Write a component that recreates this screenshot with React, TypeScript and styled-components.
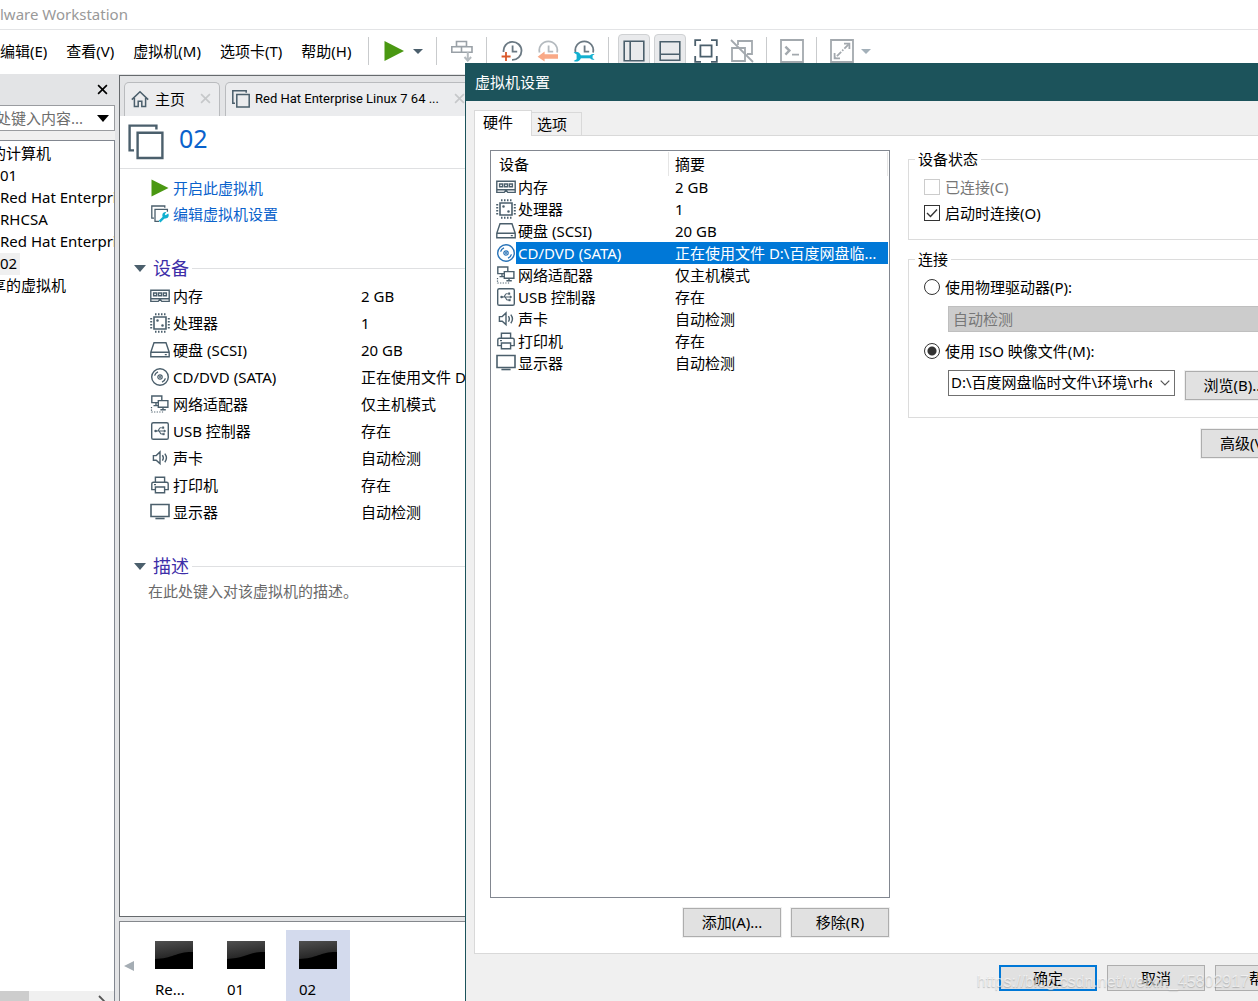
import React from "react";
import styled, { createGlobalStyle, css } from "styled-components";

const Global = createGlobalStyle`
  *, *::before, *::after { box-sizing: border-box; }
  html, body, #root { height: 100%; }
  body { margin: 0; overflow: hidden; }
  body, button, input, select {
    font-family: "Noto Sans", "Noto Sans CJK SC", sans-serif;
    font-size: 15px;
    line-height: 20px;
    color: #000;
  }
  button { cursor: pointer; }
`;

const slate = "#4b5f6c";

/* ---------- window frame ---------- */

const Window = styled.div`
  position: relative;
  display: flex;
  flex-direction: column;
  height: 100vh;
  overflow: hidden;
  background: #fff;
`;

const TitleBar = styled.header`
  flex: none;
  height: 30px;
  padding: 4px 0;
  border-bottom: 1px solid #e3e4e6;
  color: #999;
`;

const MenuBar = styled.div`
  flex: none;
  display: flex;
  align-items: center;
  height: 44px;
  padding-bottom: 2px;
  white-space: nowrap;
`;

const Menus = styled.nav`
  display: flex;
  gap: 19px;
  width: 368px;
`;

const MenuItem = styled.button`
  padding: 0;
  border: 0;
  background: none;
`;

const Divider = styled.span`
  flex: none;
  width: 1px;
  height: 28px;
  background: #c9cbcd;
`;

const Tools = styled.div<{ $gap?: number; $pad?: number }>`
  display: flex;
  align-items: center;
  gap: ${(p) => p.$gap ?? 0}px;
  padding: 0 ${(p) => (p.$pad ?? 14) - 1}px 0 ${(p) => p.$pad ?? 14}px;
`;

const ToolButton = styled.button<{ $pressed?: boolean; $wide?: number }>`
  display: flex;
  align-items: center;
  justify-content: center;
  width: ${(p) => p.$wide ?? 22}px;
  height: 34px;
  padding: 0;
  border: 1px solid ${(p) => (p.$pressed ? "#cfd1d3" : "transparent")};
  border-radius: 4px;
  background: ${(p) => (p.$pressed ? "#e9eaec" : "none")};
  svg { flex: none; display: block; }
`;

const Workspace = styled.div`
  flex: 1;
  min-height: 0;
  display: flex;
  gap: 4px;
  background: #e3e4e6;
`;

/* ---------- library sidebar ---------- */

const Sidebar = styled.aside`
  flex: none;
  width: 115px;
  display: flex;
  flex-direction: column;
  overflow: hidden;
  white-space: nowrap;
  background: #f0f0f0;
`;

const SidebarHead = styled.div`
  display: flex;
  justify-content: flex-end;
  align-items: center;
  height: 31px;
  padding: 0 7px;
  background: #e3e4e6;
`;

const IconButton = styled.button`
  display: flex;
  padding: 0;
  border: 0;
  background: none;
  svg { display: block; }
`;

const SearchBox = styled.div`
  display: flex;
  align-items: center;
  height: 26px;
  padding-right: 5px;
  border: 1px solid #9a9ca0;
  border-left: 0;
  background: #fff;
`;

const SearchInput = styled.input`
  flex: 1;
  min-width: 0;
  padding: 0;
  border: 0;
  outline: 0;
  background: none;
  text-indent: -4px;
  color: #6d6d6d;
`;

const Tree = styled.ul`
  flex: 1;
  margin: 9px 0 0;
  padding: 2px 0;
  list-style: none;
  overflow: hidden;
  border: 1px solid #828790;
  border-width: 1px 1px 0 0;
  background: #fff;
`;

const TreeRow = styled.li<{ $depth: number }>`
  height: 22px;
  margin-left: ${(p) => (p.$depth ? 0 : -9)}px;
`;

const TreeLabel = styled.span<{ $selected?: boolean }>`
  display: inline-block;
  height: 22px;
  padding-right: 3px;
  background: ${(p) => (p.$selected ? "#f0f0f0" : "none")};
`;

const ScrollTrack = styled.div`
  flex: none;
  display: flex;
  justify-content: space-between;
  height: 10px;
  padding-right: 8px;
  overflow: hidden;
  border-right: 1px solid #828790;
`;

const ScrollThumb = styled.span`
  width: 29px;
  background: #cdcdcd;
`;

/* ---------- machine view ---------- */

const Main = styled.main`
  flex: 1;
  min-width: 0;
  display: flex;
  flex-direction: column;
  gap: 4px;
  padding-top: 1px;
`;

const Machine = styled.section`
  flex: 1;
  min-height: 0;
  border: 1px solid #666a6d;
  background: #fff;
`;

const TabStrip = styled.div`
  display: flex;
  gap: 5px;
  height: 40px;
  padding: 6px 4px 0;
  background: #e3e4e6;
`;

const Tab = styled.div`
  display: flex;
  align-items: center;
  gap: 6px;
  padding: 0 8px 2px 6px;
  border: 1px solid #b9bbbe;
  border-bottom: 0;
  border-radius: 5px 5px 0 0;
  background: #ebecee;
  white-space: nowrap;
`;

const TabLink = styled.button<{ $small?: boolean }>`
  display: flex;
  align-items: center;
  gap: ${(p) => (p.$small ? 5 : 6)}px;
  margin-right: 9px;
  padding: 0;
  border: 0;
  background: none;
  ${(p) => p.$small && css`font-family: Roboto, sans-serif; font-size: 13px;`}
`;

const MachineHead = styled.div`
  display: flex;
  align-items: center;
  gap: 15px;
  height: 53px;
  padding: 0 8px;
  border-bottom: 1px solid #dfe0e2;
`;

const MachineName = styled.h1`
  margin: 0;
  padding-bottom: 8px;
  font-size: 25px;
  line-height: 36px;
  font-weight: 400;
  color: #0a62cc;
`;

const Actions = styled.div`
  padding: 6px 30px 27px;
`;

const ActionLink = styled.a`
  display: flex;
  align-items: center;
  gap: 3px;
  height: 26px;
  color: #0a62cc;
  text-decoration: none;
  svg { flex: none; }
`;

const SectionTitle = styled.h2`
  display: flex;
  align-items: center;
  gap: 7px;
  height: 28px;
  margin: 0;
  padding-left: 14px;
  font-size: 18px;
  line-height: 28px;
  font-weight: 400;
  color: #3d2ea8;
  white-space: nowrap;
  &::after {
    content: "";
    flex: 1;
    margin-left: -4px;
    height: 1px;
    background: #dfe0e2;
  }
`;

const Summary = styled.table`
  margin: 0 0 27px 30px;
  border-collapse: collapse;
  white-space: nowrap;
  td, th { height: 27px; padding: 0; font-weight: 400; text-align: left; }
  th { width: 211px; }
`;

const Named = styled.span`
  display: flex;
  align-items: center;
  gap: 3px;
  svg { flex: none; }
`;

const Description = styled.p`
  margin: 1px 28px;
  color: #6a6a6a;
`;

const Strip = styled.section`
  flex: none;
  display: flex;
  gap: 8px;
  height: 80px;
  padding: 8px 4px 0;
  border: 1px solid #85888d;
  border-bottom: 0;
  background: #fff;
`;

const StripArrow = styled(IconButton)`
  align-items: center;
  width: 10px;
`;

const Thumb = styled.button<{ $active?: boolean }>`
  display: flex;
  flex-direction: column;
  align-items: flex-start;
  gap: 10px;
  width: 64px;
  padding: 11px 13px 0;
  border: 0;
  background: ${(p) => (p.$active ? "#d3daed" : "none")};
  svg { flex: none; }
`;

/* ---------- settings dialog ---------- */

const Dialog = styled.section`
  position: absolute;
  top: 63px;
  left: 465px;
  right: -65px;
  bottom: 0;
  display: flex;
  flex-direction: column;
  border-left: 1px solid #1c535b;
  background: #f0f0f0;
  white-space: nowrap;
`;

const DialogTitle = styled.h2`
  flex: none;
  height: 38px;
  margin: 0 0 9px;
  padding: 9px;
  background: #1c535b;
  color: #fff;
  font-size: 15px;
  line-height: 20px;
  font-weight: 400;
`;

const DialogTabs = styled.div`
  display: flex;
  align-items: flex-end;
  padding-left: 8px;
`;

const DialogTab = styled.button<{ $active?: boolean }>`
  border: 1px solid #d9d9d9;
  border-bottom: 0;
  text-align: left;
  ${(p) =>
    p.$active
      ? css`
          position: relative;
          height: 26px;
          width: 58px;
          margin-bottom: -1px;
          padding: 0 0 4px 8px;
          background: #fff;
        `
      : css`
          height: 23px;
          width: 50px;
          padding: 0 0 0 5px;
          border-left: 0;
          background: #f0f0f0;
        `}
`;

const DialogPage = styled.div`
  flex: 1;
  min-height: 0;
  display: flex;
  gap: 18px;
  margin: 0 9px 0 8px;
  padding: 14px 13px 15px 15px;
  border: 1px solid #d9d9d9;
  background: #fff;
`;

const HardwareColumn = styled.div`
  flex: none;
  width: 400px;
  display: flex;
  flex-direction: column;
  gap: 9px;
`;

const ListBox = styled.div`
  flex: 1;
  padding-right: 1px;
  border: 1px solid #828790;
`;

const Hardware = styled.table`
  width: 100%;
  border-collapse: collapse;
  table-layout: fixed;
  th, td { padding: 0; text-align: left; font-weight: 400; }
  th { height: 25px; padding: 0 0 0 8px; background: linear-gradient(#e5e5e5, #e5e5e5) right 0 top 1px / 1px 24px no-repeat; }
  th:first-child { width: 178px; }
  th + th { padding-left: 6px; }
  td { height: 22px; }
`;

const HardwareName = styled.span`
  display: flex;
  align-items: center;
  height: 22px;
  padding-left: 5px;
  svg { flex: none; }
`;

const Cell = styled.span<{ $selected?: boolean; $inset: number }>`
  display: block;
  flex: 1;
  height: 22px;
  padding: 1px 4px 1px ${(p) => p.$inset}px;
  overflow: hidden;
  text-overflow: ellipsis;
  color: ${(p) => (p.$selected ? "#fff" : "#000")};
  background: ${(p) => (p.$selected ? "#0078d7" : "none")};
`;

const ButtonRow = styled.div`
  display: flex;
  justify-content: flex-end;
  gap: 8px;
`;

const PushButton = styled.button<{ $primary?: boolean; $low?: boolean }>`
  flex: none;
  width: 98px;
  height: ${(p) => (p.$low ? 26 : 29)}px;
  margin: 1px;
  padding: 0 0 1px;
  border: ${(p) => (p.$primary ? "2px solid #0078d7" : "1px solid #adadad")};
  background: #e1e1e1;
  box-shadow: 0 0 0 1px #f0f0f0;
`;

const OptionsColumn = styled.div`
  flex: 1;
  min-width: 0;
  display: flex;
  flex-direction: column;
`;

const Group = styled.fieldset<{ $bottom: number }>`
  min-width: 0;
  margin: 0 0 10px;
  padding: 6px 15px ${(p) => p.$bottom}px;
  border: 1px solid #dcdcdc;
  legend { margin-left: -9px; padding: 0 3px; line-height: 18px; }
`;

const Choice = styled.label<{ $muted?: boolean }>`
  display: flex;
  align-items: center;
  gap: 5px;
  height: 26px;
  color: ${(p) => (p.$muted ? "#777" : "#000")};
`;

const Mark = styled.input`
  flex: none;
  appearance: none;
  width: 16px;
  height: 16px;
  margin: 0;
  border: 1px solid #333;
  background: #fff center / 14px 14px no-repeat;
  &[type="radio"] { border-radius: 50%; }
  &[type="radio"]:checked { background-image: radial-gradient(circle, #333 0 4px, transparent 5px); }
  &[type="checkbox"]:checked {
    background-image: url("data:image/svg+xml,%3Csvg xmlns='http://www.w3.org/2000/svg' viewBox='0 0 14 14'%3E%3Cpath d='M2 7l3.5 3.5L12 3.5' fill='none' stroke='%23333' stroke-width='1.4'/%3E%3C/svg%3E");
  }
  &:disabled { border-color: #ccc; }
`;

const Field = styled.div`
  display: flex;
  align-items: flex-start;
  gap: 9px;
  margin: 6px 0 6px 24px;
`;

const Combo = styled.span`
  flex: 1;
  min-width: 0;
  display: grid;
  align-items: center;
  > * { grid-area: 1 / 1; }
  svg { justify-self: end; margin-right: 5px; pointer-events: none; }
`;

const Select = styled.select`
  appearance: none;
  width: 100%;
  height: 26px;
  padding: 0 22px 2px 2px;
  border: 1px solid #707070;
  border-radius: 0;
  background: #fff;
  opacity: 1;
  &:disabled {
    padding-left: 4px;
    padding-bottom: 0;
    border-color: #bfbfbf;
    background: #ccc;
    color: #777;
  }
`;

const Footer = styled.footer`
  flex: none;
  height: 47px;
  padding: 10px 9px;
`;

const Watermark = styled.span`
  position: absolute;
  right: 9px;
  bottom: 9px;
  font: 16px/20px "Liberation Sans", sans-serif;
  color: rgba(255, 255, 255, 0.6);
  text-shadow: 0 1px 1px rgba(110, 110, 110, 0.4);
  pointer-events: none;
`;

/* ---------- drawings ---------- */

type IconProps = { color?: string };

const Svg = ({
  w = 20,
  h = 20,
  color = slate,
  sw = 1.4,
  children,
}: {
  w?: number;
  h?: number;
  color?: string;
  sw?: number;
  children: React.ReactNode;
}) => (
  <svg width={w} height={h} viewBox={`0 0 ${w} ${h}`} fill="none" stroke={color} strokeWidth={sw} aria-hidden>
    {children}
  </svg>
);

const MemoryIcon = () => (
  <Svg>
    <path d="M.8 4.2h18.4v8.6H.8zM.8 12.8v2.6h7.4l1-1.2h1.6l1 1.2h7.4v-2.6" />
    <path d="M3.6 7h3v2.8h-3zM8.5 7h3v2.8h-3zM13.4 7h3v2.8h-3z" />
  </Svg>
);

const CpuIcon = () => (
  <Svg>
    <path d="M4 4h12v12H4z" strokeWidth="1.6" />
    <path d="M5 1.2h11M5 18.8h11M1.2 5v11M18.8 5v11" strokeWidth="2" strokeDasharray="1.5 1.5" />
    <circle cx="7.5" cy="7.5" r=".6" />
    <circle cx="12.5" cy="12.5" r=".6" />
  </Svg>
);

const DiskIcon = () => (
  <Svg>
    <path d="M.8 12.2 4 2.8h12l3.2 9.4v4.6H.8zM.8 12.2h18.4M14.8 14.6h2" />
  </Svg>
);

const DiscIcon = ({ color }: IconProps) => (
  <Svg color={color}>
    <circle cx="10" cy="10" r="8.3" />
    <circle cx="10" cy="10" r="2.2" strokeWidth="1.2" />
    <circle cx="10" cy="10" r=".4" />
    <path d="M4.6 8.6a5.6 5.6 0 0 1 3.4-3.8M15.4 11.4a5.6 5.6 0 0 1-3.4 3.8" />
  </Svg>
);

const NetworkIcon = () => (
  <Svg>
    <path d="M8 8.6H1.8V2h10v4M6 8.6v3M3.5 11.6H8" />
    <path d="M8.3 6.6h9.6v6.6H8.3zM13 13.2v2.6M10.4 15.8h5.4" />
    <path d="M1.5 13v5.4M1.5 18h12" strokeWidth="1.2" strokeDasharray="1.2 1.4" />
  </Svg>
);

const UsbIcon = () => (
  <Svg>
    <rect x="1.7" y="1.7" width="16.6" height="16.6" rx="1.6" />
    <path d="M5 10h9.5M7.5 10c1.4 0 1.4-3.2 3-3.2h1.2M8.6 10c1.4 0 1.4 3 3 3h1" strokeWidth="1.1" />
    <path d="M12.2 5.8h1.8v1.8h-1.8zM12.6 12.2h1.8V14h-1.8zM14 8.8 16 10l-2 1.2z" fill={slate} strokeWidth=".4" />
    <circle cx="5.6" cy="10" r="1.3" fill={slate} stroke="none" />
  </Svg>
);

const SoundIcon = () => (
  <Svg>
    <path d="M3.4 7.6h2.8L10 4v11.6l-3.8-3.4H3.4zM12.4 7.2c1.1 1.6 1.1 3.8 0 5.4M14.8 5.6c2 2.6 2 6 0 8.6" />
  </Svg>
);

const PrinterIcon = () => (
  <Svg>
    <path d="M5.4 7V2.2h9.2V7M5.4 14.6H1.8V8.8q0-1.6 1.6-1.6h13.2q1.6 0 1.6 1.6v5.8h-3.6M5.4 12h9.2v5.8H5.4zM4 9.6h2" />
  </Svg>
);

const DisplayIcon = () => (
  <Svg>
    <path d="M1 2.5h18v12H1z" strokeWidth="1.6" />
    <path d="M5.4 16.5h9.2" strokeWidth="1.6" />
  </Svg>
);

const PlayIcon = ({ size }: { size: number }) => (
  <svg width={size} height={size} viewBox="0 0 20 20" aria-hidden>
    <path d="M.5 0 20 10 .5 20z" fill="#4a9812" />
  </svg>
);

const Caret = ({ color = slate, w = 10, h = 5 }: { color?: string; w?: number; h?: number }) => (
  <svg width={w} height={h} viewBox="0 0 10 5" preserveAspectRatio="none" aria-hidden>
    <path d="M0 0h10L5 5z" fill={color} />
  </svg>
);

const Cross = ({ color, size }: { color: string; size: number }) => (
  <svg width={size} height={size} viewBox="0 0 10 10" aria-hidden>
    <path d="M1 1l8 8M9 1 1 9" stroke={color} strokeWidth="1.5" />
  </svg>
);

const Chevron = ({ color = "#555" }: IconProps) => (
  <svg width="10" height="6" viewBox="0 0 10 6" aria-hidden>
    <path d="M.7.7 5 5 9.3.7" fill="none" stroke={color} strokeWidth="1.2" />
  </svg>
);

const HomeIcon = () => (
  <Svg w={18} h={18}>
    <path d="M.8 9.6 9 1.8l8.2 7.8M3.4 8v8.6h3.8v-5.4h3.6v5.4h3.8V8" strokeWidth="1.5" />
  </Svg>
);

const PagesIcon = ({ size, sw = 1.5 }: { size: number; sw?: number }) => (
  <svg width={size} height={size} viewBox="0 0 18 18" fill="none" stroke={slate} strokeWidth={sw} aria-hidden>
    <path d="M3 13.2H.8V.8h13.4v2" />
    <path d="M4.8 4.4h12.4v12.6H4.8z" />
  </svg>
);

const EditIcon = () => (
  <Svg>
    <path d="M4 14.2H1.8V2h13v1.8M9 17.4H5V5.4h12.4v2.4" strokeWidth="1.3" />
    <path d="m9.6 17.6 5-5" stroke="#12b0d0" strokeWidth="2.4" />
    <path d="M18.2 9.6a3.2 3.2 0 1 1-2-1.4l-1.4 2 .8 1z" fill="#12b0d0" stroke="none" />
  </Svg>
);

const SendKeysIcon = () => (
  <Svg w={22} h={22} color="#9aa1a7" sw={1.6}>
    <path d="M5.5 1.5h10v5h-10zM.8 6.8h9.7v5.4H.8zM10.5 6.8H21v5.4H10.5z" />
    <path d="M16.8 12v8M13.5 17l3.3 3.6 3.3-3.6" stroke="#b5bbbf" strokeWidth="2" />
  </Svg>
);

const Clock = ({ kind }: { kind: "add" | "back" | "manage" }) => (
  <Svg w={22} h={22} color={kind === "back" ? "#b4babf" : "#6b7983"} sw={1.8}>
    {kind === "add" ? <path d="M2.6 12a9 9 0 1 1 8.4 7.8" /> : <path d="M2.6 12.6a9 9 0 1 1 17.4 0" />}
    <path d="M11.6 5.6v6h4.6" />
    {kind === "add" && <path d="M5 12v9M.6 16.5h9" stroke="#d9582a" strokeWidth="1.8" />}
    {kind === "back" && <path d="M21 14.2H7.6v-2.8L.6 16.8l7 4.8v-2.8H21z" fill="#f9a987" stroke="none" />}
    {kind === "manage" && (
      <>
        <path d="M6.5 16.8H18" stroke="#12b0d0" strokeWidth="3" />
        <path d="M.6 12.4c4.4-1.6 7.4.8 7.4 4.400s-3.400 5.800-7.400 4.200l3-1.800v-4.800zM21.600 14.200c-2.800-1-4.800.6-4.800 2.600s2 3.600 4.800 2.600l-2-1.200v-2.800z" fill="#12b0d0" stroke="none" />
      </>
    )}
  </Svg>
);

const SidebarIcon = () => (
  <Svg w={22} h={22} sw={1.6}>
    <path d="M1.2 1.2h19.6v19.6H1.2zM7.2 1.2v19.6" />
  </Svg>
);

const BottomIcon = () => (
  <Svg w={22} h={22} sw={1.6}>
    <path d="M1.2 1.8h19.6v18.4H1.2zM1.2 14.2h19.6" />
  </Svg>
);

const FullscreenIcon = () => (
  <Svg w={24} h={24} sw={1.8}>
    <path d="M1.2 7V1.2H7M17 1.2h5.8V7M22.8 17v5.8H17M7 22.8H1.2V17" />
    <path d="M6.4 6.4h11.2v11.2H6.4z" />
  </Svg>
);

const UnityIcon = () => (
  <Svg w={24} h={24} color="#a3a9ae" sw={1.8}>
    <path d="M8 6V2h14v13h-5M2 9h13v13H2z" />
    <path d="m1 1 22 22" />
  </Svg>
);

const ConsoleIcon = () => (
  <Svg w={24} h={24} color="#a3a9ae" sw={1.8}>
    <path d="M1 1h22v22H1zM12 15.6h7" />
    <path d="m5.4 7.6 4 4-4 4" strokeWidth="2.4" />
  </Svg>
);

const StretchIcon = () => (
  <Svg w={24} h={24} color="#a3a9ae" sw={1.8}>
    <path d="M1 1h22v22H1z" />
    <path d="M14 4.6h5.4V10M10 19.4H4.6V14" />
    <path d="M18.6 5.4 5.4 18.6" strokeDasharray="6 1.5 1.5 1.5" />
  </Svg>
);

const ScreenThumb = ({ id }: { id: string }) => (
  <svg width="38" height="28" viewBox="0 0 38 28" aria-hidden>
    <defs>
      <linearGradient id={id} x1="0" y1="0" x2=".3" y2="1">
        <stop offset="0" stopColor="#505050" />
        <stop offset="1" stopColor="#242424" />
      </linearGradient>
    </defs>
    <path d="M0 0h38v28H0z" fill="#000" />
    <path d="M0 0h38v11C22 10.5 18 17.5 0 18z" fill={`url(#${id})`} />
  </svg>
);

/* ---------- data ---------- */

const hardware = [
  { name: "内存", Icon: MemoryIcon, value: "2 GB" },
  { name: "处理器", Icon: CpuIcon, value: "1" },
  { name: "硬盘 (SCSI)", Icon: DiskIcon, value: "20 GB" },
  { name: "CD/DVD (SATA)", Icon: DiscIcon, value: "正在使用文件 D:\\百度网盘临时文件", selected: true },
  { name: "网络适配器", Icon: NetworkIcon, value: "仅主机模式" },
  { name: "USB 控制器", Icon: UsbIcon, value: "存在" },
  { name: "声卡", Icon: SoundIcon, value: "自动检测" },
  { name: "打印机", Icon: PrinterIcon, value: "存在" },
  { name: "显示器", Icon: DisplayIcon, value: "自动检测" },
];

const library = [
  { label: "的计算机", depth: 0 },
  { label: "01", depth: 1 },
  { label: "Red Hat Enterprise", depth: 1 },
  { label: "RHCSA", depth: 1 },
  { label: "Red Hat Enterprise", depth: 1 },
  { label: "02", depth: 1, selected: true },
  { label: "享的虚拟机", depth: 0 },
];

const menus = ["编辑(E)", "查看(V)", "虚拟机(M)", "选项卡(T)", "帮助(H)"];

/* ---------- parts ---------- */

const Toolbar = () => (
  <MenuBar>
    <Menus>
      {menus.map((m) => (
        <MenuItem key={m}>{m}</MenuItem>
      ))}
    </Menus>
    <Divider />
    <Tools $gap={8}>
      <ToolButton aria-label="Power on"><PlayIcon size={20} /></ToolButton>
      <ToolButton aria-label="Power options" $wide={10}><Caret /></ToolButton>
    </Tools>
    <Divider />
    <Tools>
      <ToolButton aria-label="Send keys"><SendKeysIcon /></ToolButton>
    </Tools>
    <Divider />
    <Tools $gap={14}>
      <ToolButton aria-label="Take snapshot"><Clock kind="add" /></ToolButton>
      <ToolButton aria-label="Revert snapshot"><Clock kind="back" /></ToolButton>
      <ToolButton aria-label="Manage snapshots"><Clock kind="manage" /></ToolButton>
    </Tools>
    <Divider />
    <Tools $gap={4} $pad={9}>
      <ToolButton aria-label="Library" $pressed $wide={32}><SidebarIcon /></ToolButton>
      <ToolButton aria-label="Thumbnails" $pressed $wide={32}><BottomIcon /></ToolButton>
      <ToolButton aria-label="Full screen" $wide={32}><FullscreenIcon /></ToolButton>
      <ToolButton aria-label="Unity" $wide={32}><UnityIcon /></ToolButton>
    </Tools>
    <Divider />
    <Tools>
      <ToolButton aria-label="Console"><ConsoleIcon /></ToolButton>
    </Tools>
    <Divider />
    <Tools $gap={8}>
      <ToolButton aria-label="Stretch"><StretchIcon /></ToolButton>
      <ToolButton aria-label="Stretch options" $wide={10}><Caret color="#a3b0b9" /></ToolButton>
    </Tools>
  </MenuBar>
);

const Library = () => (
  <Sidebar>
    <SidebarHead>
      <IconButton aria-label="Close"><Cross color="#000" size={11} /></IconButton>
    </SidebarHead>
    <SearchBox>
      <SearchInput aria-label="Search" defaultValue="处键入内容..." />
      <IconButton aria-label="Search options"><Caret color="#000" w={12} h={7} /></IconButton>
    </SearchBox>
    <Tree>
      {library.map((item, i) => (
        <TreeRow key={i} $depth={item.depth}>
          <TreeLabel $selected={item.selected}>{item.label}</TreeLabel>
        </TreeRow>
      ))}
    </Tree>
    <ScrollTrack>
      <ScrollThumb />
      <svg width="8" height="10" viewBox="0 0 8 10" aria-hidden>
        <path d="m1 5 6 6" stroke="#555" strokeWidth="1.8" />
      </svg>
    </ScrollTrack>
  </Sidebar>
);

const MachineView = () => (
  <Main>
    <Machine>
      <TabStrip>
        <Tab>
          <TabLink><HomeIcon />主页</TabLink>
          <IconButton aria-label="Close tab"><Cross color="#c6c8ca" size={11} /></IconButton>
        </Tab>
        <Tab>
          <TabLink $small><PagesIcon size={18} />Red Hat Enterprise Linux 7 64 ...</TabLink>
          <IconButton aria-label="Close tab"><Cross color="#c6c8ca" size={11} /></IconButton>
        </Tab>
      </TabStrip>
      <MachineHead>
        <PagesIcon size={36} sw={1.2} />
        <MachineName>02</MachineName>
      </MachineHead>
      <Actions>
        <ActionLink href="#start">
          <Svg><path d="M1.5 1.5 18.5 10l-17 8.5z" fill="#4a9812" stroke="none" /></Svg>
          开启此虚拟机
        </ActionLink>
        <ActionLink href="#edit"><EditIcon />编辑虚拟机设置</ActionLink>
      </Actions>
      <SectionTitle><Caret w={12} h={7} />设备</SectionTitle>
      <Summary>
        <tbody>
          {hardware.map(({ name, Icon, value }) => (
            <tr key={name}>
              <th scope="row"><Named><Icon />{name}</Named></th>
              <td>{value}</td>
            </tr>
          ))}
        </tbody>
      </Summary>
      <SectionTitle><Caret w={12} h={7} />描述</SectionTitle>
      <Description>在此处键入对该虚拟机的描述。</Description>
    </Machine>
    <Strip>
      <StripArrow aria-label="Scroll left">
        <svg width="10" height="10" viewBox="0 0 10 10" aria-hidden>
          <path d="M10 0v10L0 5z" fill="#a5adb4" />
        </svg>
      </StripArrow>
      {["Re...", "01", "02"].map((label, i) => (
        <Thumb key={label} $active={label === "02"}>
          <ScreenThumb id={`gloss${i}`} />
          {label}
        </Thumb>
      ))}
    </Strip>
  </Main>
);

const Settings = () => (
  <Dialog role="dialog" aria-labelledby="settings-title">
    <DialogTitle id="settings-title">虚拟机设置</DialogTitle>
    <DialogTabs role="tablist">
      <DialogTab role="tab" aria-selected $active>硬件</DialogTab>
      <DialogTab role="tab" aria-selected={false}>选项</DialogTab>
    </DialogTabs>
    <DialogPage>
      <HardwareColumn>
        <ListBox>
          <Hardware>
            <thead>
              <tr><th>设备</th><th>摘要</th></tr>
            </thead>
            <tbody>
              {hardware.map(({ name, Icon, value, selected }) => (
                <tr key={name}>
                  <td>
                    <HardwareName>
                      <Icon color={selected ? "#2a74b8" : undefined} />
                      <Cell $selected={selected} $inset={2}>{name}</Cell>
                    </HardwareName>
                  </td>
                  <td><Cell $selected={selected} $inset={6}>{value}</Cell></td>
                </tr>
              ))}
            </tbody>
          </Hardware>
        </ListBox>
        <ButtonRow>
          <PushButton>添加(A)...</PushButton>
          <PushButton>移除(R)</PushButton>
        </ButtonRow>
      </HardwareColumn>
      <OptionsColumn>
        <Group $bottom={13}>
          <legend>设备状态</legend>
          <Choice $muted><Mark type="checkbox" disabled />已连接(C)</Choice>
          <Choice><Mark type="checkbox" defaultChecked />启动时连接(O)</Choice>
        </Group>
        <Group $bottom={10}>
          <legend>连接</legend>
          <Choice><Mark type="radio" name="source" />使用物理驱动器(P):</Choice>
          <Field>
            <Combo>
              <Select aria-label="物理驱动器" disabled><option>自动检测</option></Select>
              <Chevron color="#888" />
            </Combo>
          </Field>
          <Choice><Mark type="radio" name="source" defaultChecked />使用 ISO 映像文件(M):</Choice>
          <Field>
            <Combo>
              <Select aria-label="ISO 映像文件"><option>D:\百度网盘临时文件\环境\rhe</option></Select>
              <Chevron />
            </Combo>
            <PushButton>浏览(B)...</PushButton>
          </Field>
        </Group>
        <ButtonRow>
          <PushButton>高级(V)...</PushButton>
        </ButtonRow>
      </OptionsColumn>
    </DialogPage>
    <Footer>
      <ButtonRow>
        <PushButton $primary $low>确定</PushButton>
        <PushButton $low>取消</PushButton>
        <PushButton $low>帮助</PushButton>
      </ButtonRow>
    </Footer>
  </Dialog>
);

export default function App() {
  return (
    <Window>
      <Global />
      <TitleBar>lware Workstation</TitleBar>
      <Toolbar />
      <Workspace>
        <Library />
        <MachineView />
      </Workspace>
      <Settings />
      <Watermark>https://blog.csdn.net/weixin_45802917</Watermark>
    </Window>
  );
}
